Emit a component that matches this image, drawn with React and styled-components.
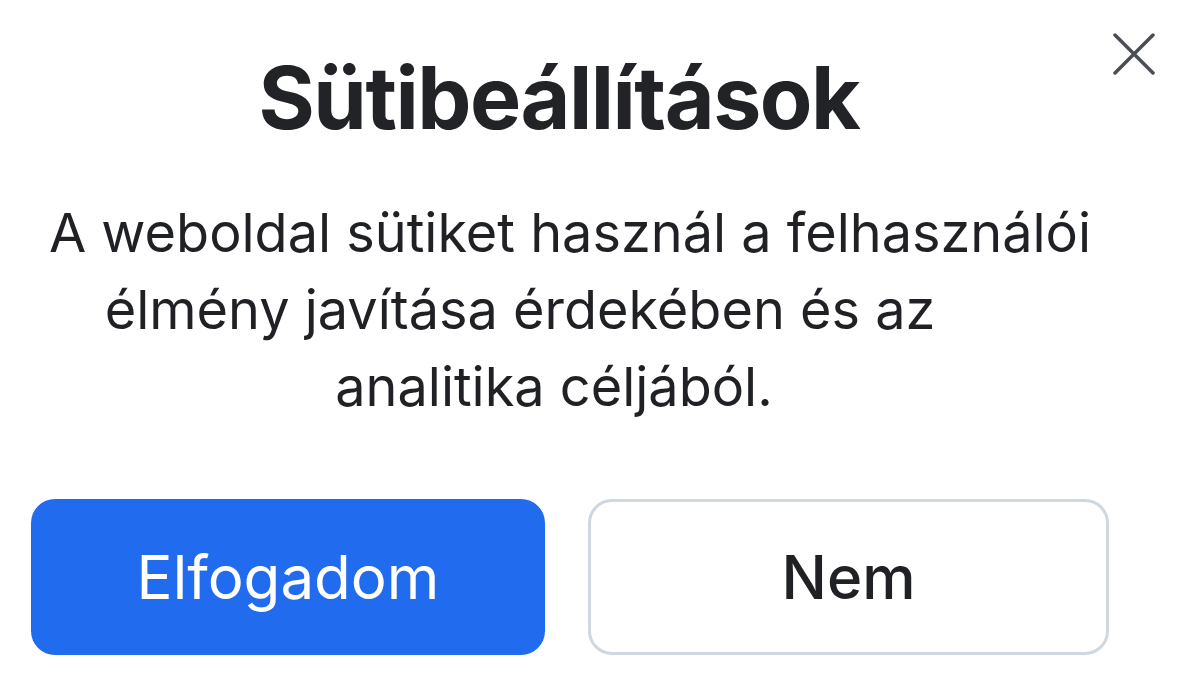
import React from "react";
import styled, { createGlobalStyle } from "styled-components";

const GlobalStyle = createGlobalStyle`
  html, body {
    margin: 0;
    padding: 0;
    background: #ffffff;
  }
  body {
    font-family: Inter, "Noto Sans", "Liberation Sans", sans-serif;
    color: #202226;
  }
`;

const lines = [
  { text: "A weboldal sütiket használ a felhasználói", shift: 0 },
  { text: "élmény javítása érdekében és az", shift: 100 },
  { text: "analitika céljából.", shift: 32 },
];

function App() {
  return (
    <>
      <GlobalStyle />
      <Dialog>
        <CloseButton aria-label="Bezárás">
          <svg width="42" height="42" viewBox="0 0 42 42" fill="none">
            <path
              d="M2 2 L40 40 M40 2 L2 40"
              stroke="#4a4e54"
              strokeWidth="3.5"
              strokeLinecap="round"
            />
          </svg>
        </CloseButton>
        <Title>Sütibeállítások</Title>
        <Message>
          {lines.map((l) => (
            <Line key={l.text} $shift={l.shift}>
              {l.text}
            </Line>
          ))}
        </Message>
        <Actions>
          <PrimaryButton>Elfogadom</PrimaryButton>
          <SecondaryButton>Nem</SecondaryButton>
        </Actions>
      </Dialog>
    </>
  );
}

export default App;

const Dialog = styled.div`
  position: relative;
  width: 1178px;
  height: 688px;
  box-sizing: border-box;
  padding: 48px 69px 0 31px;
  display: flex;
  flex-direction: column;
`;

const CloseButton = styled.button`
  position: absolute;
  top: 33px;
  right: 23px;
  width: 42px;
  height: 42px;
  padding: 0;
  border: none;
  background: none;
  display: flex;
  cursor: pointer;
`;

const Title = styled.h1`
  margin: 0;
  padding-right: 22px;
  text-align: center;
  font-size: 86px;
  line-height: 100px;
  letter-spacing: -1.5px;
  font-weight: 700;
  color: #222327;
`;

const Message = styled.div`
  margin-top: 46px;
  display: flex;
  flex-direction: column;
`;

const Line = styled.p`
  margin: 0;
  padding-right: ${(p) => p.$shift}px;
  text-align: center;
  font-size: 54px;
  line-height: 77px;
  font-weight: 400;
  color: #1f2124;
  white-space: nowrap;
`;

const Actions = styled.div`
  margin-top: 74px;
  display: flex;
  gap: 43px;
`;

const BaseButton = styled.button`
  height: 156px;
  box-sizing: border-box;
  border-radius: 24px;
  font-family: Inter, "Noto Sans", "Liberation Sans", sans-serif;
  font-size: 60px;
  cursor: pointer;
`;

const PrimaryButton = styled(BaseButton)`
  width: 514px;
  border: none;
  background: #216bef;
  color: #ffffff;
  font-weight: 400;
`;

const SecondaryButton = styled(BaseButton)`
  width: 521px;
  border: 3px solid #cfd7df;
  background: #ffffff;
  color: #1f2124;
  font-weight: 500;
`;
